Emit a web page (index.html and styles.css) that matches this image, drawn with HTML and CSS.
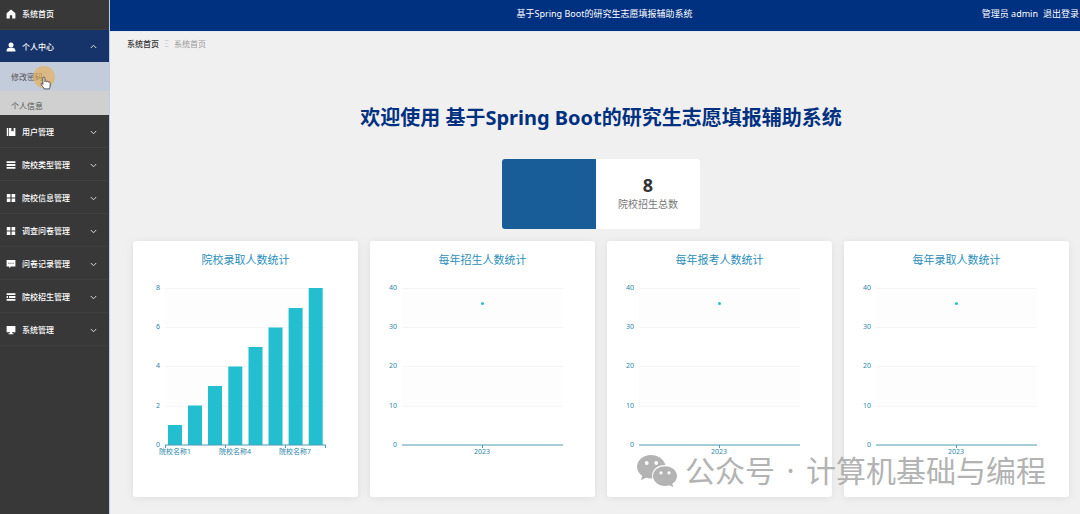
FILE: index.html
```html
<!DOCTYPE html>
<html lang="zh-CN">
<head>
<meta charset="utf-8">
<meta name="viewport" content="width=device-width, initial-scale=1">
<title>基于Spring Boot的研究生志愿填报辅助系统</title>
<link rel="stylesheet" href="styles.css">
</head>
<body>
<div class="app">
  <nav class="sidebar" aria-label="主菜单">
    <a class="menu-item home" href="#home">
      <svg class="icon" viewBox="0 0 10 10"><path d="M5 .6 9.4 4.3V9.4H6.2V6.2H3.8V9.4H.6V4.3Z"/></svg>
      <span>系统首页</span>
    </a>
    <button class="menu-item open" type="button" aria-expanded="true">
      <svg class="icon" viewBox="0 0 10 10"><circle cx="5" cy="3" r="2.5"/><path d="M.6 9.4V8Q.8 6.1 3.4 5.8H6.6Q9.2 6.1 9.4 8V9.4Z"/></svg>
      <span>个人中心</span>
      <svg class="chevron" viewBox="0 0 7 5"><path d="M.8 4 3.5 1.2 6.2 4"/></svg>
    </button>
    <div class="submenu">
      <a class="sub-item hovered" href="#password">修改密码
        <svg class="pointer" viewBox="0 0 24 26"><circle cx="11" cy="11" r="11" fill="#f0a93c" fill-opacity=".55"/><path d="M9.900 12.200c0-1.500 2-1.500 2 0v3.400c.4-.9 1.800-.7 1.900.2.5-.7 1.700-.4 1.800.4.6-.5 1.600-.1 1.600.8v3c0 1-.6 1.800-.8 2.900h-5.300c-.4-1.400-1.700-2.500-2.800-4.100-.9-1.300.4-1.800 1.100-1.100l.5.7Z" fill="#fff" stroke="#333" stroke-width=".8" stroke-linejoin="round"/></svg>
      </a>
      <a class="sub-item" href="#profile">个人信息</a>
    </div>
    <button class="menu-item" type="button">
      <svg class="icon" viewBox="0 0 10 10"><path d="M.8 1H2.2V9H.8ZM2.9 1H5.4V4.6L6.5 3.7 7.6 4.6V1H9.4V9H2.9Z"/></svg>
      <span>用户管理</span>
      <svg class="chevron" viewBox="0 0 7 5"><path d="M.8 1 3.5 3.8 6.2 1"/></svg>
    </button>
    <button class="menu-item" type="button">
      <svg class="icon" viewBox="0 0 10 10"><path d="M.6 1.2H9.4V3H.6ZM.6 4.1H9.4V5.9H.6ZM.6 7H9.4V8.8H.6Z"/></svg>
      <span>院校类型管理</span>
      <svg class="chevron" viewBox="0 0 7 5"><path d="M.8 1 3.5 3.8 6.2 1"/></svg>
    </button>
    <button class="menu-item" type="button">
      <svg class="icon" viewBox="0 0 10 10"><path d="M.8 1H4.4V4.4H.8ZM5.6 1H9.2V4.4H5.6ZM.8 5.6H4.4V9H.8ZM5.6 5.6H9.2V9H5.6Z"/></svg>
      <span>院校信息管理</span>
      <svg class="chevron" viewBox="0 0 7 5"><path d="M.8 1 3.5 3.8 6.2 1"/></svg>
    </button>
    <button class="menu-item" type="button">
      <svg class="icon" viewBox="0 0 10 10"><path d="M.8 1H4.4V4.4H.8ZM5.6 1H9.2V4.4H5.6ZM.8 5.6H4.4V9H.8ZM5.6 5.6H9.2V9H5.6Z"/></svg>
      <span>调查问卷管理</span>
      <svg class="chevron" viewBox="0 0 7 5"><path d="M.8 1 3.5 3.8 6.2 1"/></svg>
    </button>
    <button class="menu-item" type="button">
      <svg class="icon" viewBox="0 0 10 10"><path fill-rule="evenodd" d="M.6 1H9.4V7.4H5L3.3 9.2V7.4H.6ZM2.4 3.8V4.8H3.4V3.8ZM4.5 3.8V4.8H5.5V3.8ZM6.6 3.8V4.8H7.6V3.8Z"/></svg>
      <span>问卷记录管理</span>
      <svg class="chevron" viewBox="0 0 7 5"><path d="M.8 1 3.5 3.8 6.2 1"/></svg>
    </button>
    <button class="menu-item" type="button">
      <svg class="icon" viewBox="0 0 10 10"><path d="M.6 1.2H9.4V3H.6ZM.6 4.1H2V5.9H.6ZM3 4.1H9.4V5.9H3ZM.6 7H9.4V8.8H.6Z"/></svg>
      <span>院校招生管理</span>
      <svg class="chevron" viewBox="0 0 7 5"><path d="M.8 1 3.5 3.8 6.2 1"/></svg>
    </button>
    <button class="menu-item" type="button">
      <svg class="icon" viewBox="0 0 10 10"><path d="M.6 1H9.4V7.2H6V8.2H7.4V9.2H2.6V8.2H4V7.2H.6Z"/></svg>
      <span>系统管理</span>
      <svg class="chevron" viewBox="0 0 7 5"><path d="M.8 1 3.5 3.8 6.2 1"/></svg>
    </button>
  </nav>

  <div class="page">
    <header class="topbar">
      <span class="brand">基于Spring Boot的研究生志愿填报辅助系统</span>
      <div class="account"><span>管理员 admin</span><a href="#logout">退出登录</a></div>
    </header>
    <main class="content">
      <nav class="breadcrumb" aria-label="面包屑">
        <a href="#home">系统首页</a><span class="sep">Ξ</span><span class="current">系统首页</span>
      </nav>
      <h1 class="welcome">欢迎使用 基于Spring Boot的研究生志愿填报辅助系统</h1>
      <section class="stat">
        <div class="stat-color"></div>
        <div class="stat-body"><strong>8</strong><span>院校招生总数</span></div>
      </section>
      <div class="cards">
        <section class="card">
          <h2>院校录取人数统计</h2>
          <svg class="chart" viewBox="0 27 225 229">
            <path class="band" d="M32 47H193V86H32ZM32 125H193V165H32Z"/>
            <path class="grid" d="M32 47.5H193M32 86.5H193M32 125.5H193M32 165.5H193"/>
            <path class="bars" d="M35 184h14v20h-14ZM55 164.5h14v39.5h-14ZM75 145h14v59h-14ZM95.3 125.5h14v78.5h-14ZM115.5 106h14v98h-14ZM135.5 86.5h14v117.5h-14ZM155.6 67h14v137h-14ZM175.7 47h14v157h-14Z"/>
            <path class="axis" d="M32 204H193M32.5 204v3M92.5 204v3M152.5 204v3M192.5 204v3"/>
            <g class="y-labels"><text x="27" y="49">8</text><text x="27" y="88">6</text><text x="27" y="127">4</text><text x="27" y="167">2</text><text x="27" y="206">0</text></g>
            <g class="x-labels"><text x="42" y="213">院校名称1</text><text x="102" y="213">院校名称4</text><text x="162" y="213">院校名称7</text></g>
          </svg>
        </section>
        <section class="card">
          <h2>每年招生人数统计</h2>
          <svg class="chart" viewBox="0 27 225 229">
            <path class="band" d="M32 47H193V86H32ZM32 125H193V165H32Z"/>
            <path class="grid" d="M32 47.5H193M32 86.5H193M32 125.5H193M32 165.5H193"/>
            <path class="axis" d="M32 204H193M112.5 204v3"/>
            <circle class="dot" cx="112.5" cy="62.5" r="1.5"/>
            <g class="y-labels"><text x="27" y="49">40</text><text x="27" y="88">30</text><text x="27" y="127">20</text><text x="27" y="167">10</text><text x="27" y="206">0</text></g>
            <g class="x-labels"><text x="112" y="213">2023</text></g>
          </svg>
        </section>
        <section class="card">
          <h2>每年报考人数统计</h2>
          <svg class="chart" viewBox="0 27 225 229">
            <path class="band" d="M32 47H193V86H32ZM32 125H193V165H32Z"/>
            <path class="grid" d="M32 47.5H193M32 86.5H193M32 125.5H193M32 165.5H193"/>
            <path class="axis" d="M32 204H193M112.5 204v3"/>
            <circle class="dot" cx="112.5" cy="62.5" r="1.5"/>
            <g class="y-labels"><text x="27" y="49">40</text><text x="27" y="88">30</text><text x="27" y="127">20</text><text x="27" y="167">10</text><text x="27" y="206">0</text></g>
            <g class="x-labels"><text x="112" y="213">2023</text></g>
          </svg>
        </section>
        <section class="card">
          <h2>每年录取人数统计</h2>
          <svg class="chart" viewBox="0 27 225 229">
            <path class="band" d="M32 47H193V86H32ZM32 125H193V165H32Z"/>
            <path class="grid" d="M32 47.5H193M32 86.5H193M32 125.5H193M32 165.5H193"/>
            <path class="axis" d="M32 204H193M112.5 204v3"/>
            <circle class="dot" cx="112.5" cy="62.5" r="1.5"/>
            <g class="y-labels"><text x="27" y="49">40</text><text x="27" y="88">30</text><text x="27" y="127">20</text><text x="27" y="167">10</text><text x="27" y="206">0</text></g>
            <g class="x-labels"><text x="112" y="213">2023</text></g>
          </svg>
        </section>
      </div>
    </main>
  </div>

  <div class="watermark">
    <svg viewBox="0 0 40 34"><path fill-rule="evenodd" d="M14 1C6.2 1 0 6.2 0 12.8c0 3.7 2 6.9 5.2 9L4 26.2l5-2.5c1.7.5 3.4.7 5.2.7h1.3c-.3-1-.4-2-.4-3C15.1 15.3 20.7 11 27.6 11h.8C26.9 5.2 21 1 14 1ZM9.7 7.1a1.9 1.9 0 1 1 0 3.8 1.9 1.9 0 0 1 0-3.8Zm9.5 0a1.9 1.9 0 1 1 0 3.8 1.9 1.9 0 0 1 0-3.8Z"/><path fill-rule="evenodd" d="M28 12.2c-6.7 0-12 4.3-12 9.8s5.3 9.900 12 9.900c1.500 0 3-.2 4.300-.6l4 2-1-3.500c2.900-1.800 4.700-4.600 4.700-7.800 0-5.500-5.300-9.800-12-9.800Zm-4 5a1.600 1.600 0 1 1 0 3.200 1.600 1.600 0 0 1 0-3.200Zm8 0a1.600 1.600 0 1 1 0 3.200 1.600 1.600 0 0 1 0-3.200Z"/></svg>
    <span class="watermark-text"><span>公众号</span><span class="watermark-dot">·</span><span>计算机基础与编程</span></span>
  </div>
</div>
</body>
</html>
```
FILE: styles.css
```css
* { box-sizing: border-box; }
body {
  margin: 0;
  background: #f0f0f0;
  font-family: "Noto Sans", "Noto Sans CJK SC", sans-serif;
  font-size: 8px;
  line-height: 12px;
}
a { color: inherit; text-decoration: none; }
.app { position: relative; display: flex; min-height: 100vh; }

.sidebar {
  flex: 0 0 110px;
  background: #383838;
  border-right: 1px solid #b9cfe8;
  color: #fff;
}
.menu-item {
  display: flex;
  align-items: center;
  gap: 6px;
  width: 100%;
  height: 33px;
  padding: 2px 12px 0 6px;
  border: 0;
  border-bottom: 1px solid #3e3e3e;
  background: none;
  color: #fff;
  font: inherit;
  font-weight: 500;
  text-align: left;
}
.menu-item.home { height: 30px; padding-top: 0; padding-bottom: 2px; }
.menu-item.open { height: 32px; padding-top: 1px; border: 0; background: #17346a; }
.icon { width: 10px; height: 10px; fill: #fff; }
.chevron {
  width: 7px;
  height: 5px;
  margin-left: auto;
  fill: none;
  stroke: #d8d8d8;
}
.submenu { background: #d0d0d0; color: #555; }
.sub-item {
  position: relative;
  display: flex;
  align-items: center;
  height: 24px;
  padding: 5px 11px 0;
}
.sub-item.hovered { height: 29px; padding-top: 0; background: #c3ccdb; }
.pointer { position: absolute; left: 33px; top: 4px; width: 24px; height: 26px; }

.page { flex: 1; min-width: 0; }
.topbar {
  display: grid;
  grid-template-columns: 1fr auto 1fr;
  align-items: center;
  height: 31px;
  padding: 0 1px 3px 28px;
  background: #003080;
  color: #fff;
  font-size: 9px;
}
.brand { grid-column: 2; margin-right: 8px; }
.account { display: flex; justify-content: flex-end; gap: 5px; }

.content {
  display: flex;
  flex-direction: column;
  align-items: center;
  padding: 6px 11px 17px 23px;
  border-top: 1px solid #dfeaf6;
}
.breadcrumb { display: flex; align-self: stretch; margin-left: -6px; color: #999; }
.breadcrumb a { color: #333; font-weight: 500; }
.sep { width: 15px; color: #ccc; text-align: center; }
.welcome {
  margin: 54px 0 27px;
  color: #003080;
  font-size: 20px;
  line-height: 28px;
  font-weight: 700;
}
.stat {
  display: flex;
  width: 198px;
  height: 70px;
  border-radius: 3px;
  overflow: hidden;
  background: #fff;
}
.stat-color { flex: 0 0 94px; background: #185d98; }
.stat-body {
  flex: 1;
  display: flex;
  flex-direction: column;
  align-items: center;
  justify-content: center;
  padding-bottom: 6px;
  color: #777;
  font-size: 10px;
}
.stat-body strong { color: #333; font-size: 18px; line-height: 26px; }
.cards {
  display: grid;
  grid-template-columns: repeat(4, 1fr);
  gap: 12px;
  align-self: stretch;
  margin-top: 12px;
}
.card {
  border-radius: 3px;
  background: #fff;
  box-shadow: 0 1px 8px rgba(0, 0, 0, 0.08);
}
.card h2 {
  margin: 0;
  padding-top: 11px;
  color: #2b8fba;
  font-size: 11px;
  line-height: 16px;
  font-weight: 400;
  text-align: center;
}
.chart { display: block; width: 100%; font-size: 7px; }
.band { fill: #fdfdfd; }
.grid { stroke: #f5f5f5; }
.bars { fill: #23bfd0; }
.axis { fill: none; stroke: #4a9bb8; }
.dot { fill: #23bfd0; }
.y-labels { fill: #2b86ac; text-anchor: end; }
.x-labels { fill: #2b86ac; text-anchor: middle; }

.watermark {
  position: absolute;
  right: 34px;
  bottom: 26px;
  display: flex;
  align-items: center;
  gap: 8px;
  color: #a6a6a6;
  font-size: 30px;
  line-height: 34px;
  opacity: 0.85;
}
.watermark svg { width: 40px; height: 34px; fill: #a6a6a6; }
.watermark-text { display: flex; }
.watermark-dot { width: 31px; text-align: center; }
```
